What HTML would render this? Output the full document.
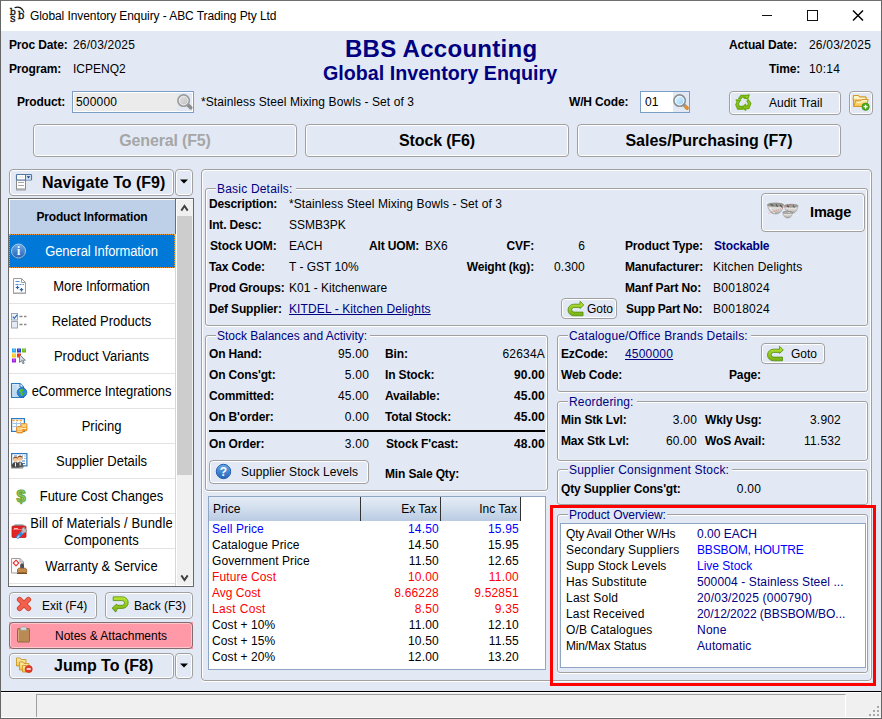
<!DOCTYPE html>
<html lang="en">
<head>
<meta charset="utf-8">
<title>Global Inventory Enquiry - ABC Trading Pty Ltd</title>
<style>
*{box-sizing:border-box;margin:0;padding:0}
html,body{width:882px;height:719px;overflow:hidden;background:#e2e9f4}
body{position:relative;font-family:"Liberation Sans",sans-serif;font-size:12px;line-height:14px;color:#000}
.a{position:absolute;white-space:nowrap}
.b{font-weight:bold;letter-spacing:-.15px}
.r{text-align:right}
.n{letter-spacing:.2px}
.c{text-align:center}
.nv{color:#000080}
.bl{color:#0000ff}
.rd{color:#ff0000}
.lk{color:#000080;text-decoration:underline}
.btn{position:absolute;border:1px solid #a0a0a0;border-radius:4px;background:#e2e9f4;box-shadow:inset 0 0 0 1px #fff}
.grp{position:absolute;border:1px solid #a0a0a0;border-radius:3px;box-shadow:inset 1px 1px 0 #fff,inset -1px 0 0 #fff,0 1px 0 #fff}
.lg{position:absolute;top:-7px;left:10px;padding:0 3px 0 1px;background:#e2e9f4;color:#000080;font-size:12px;line-height:14px;white-space:nowrap}
.it{left:28px;width:147px;font-size:13px;line-height:15px;letter-spacing:0;transform:scaleY(1.06)}
.sep{left:9px;width:166px;height:1px;background:#e3e3e3}
.pe{left:361px;width:78px}
.pi{left:441px;width:78px}
</style>
</head>
<body>
<!-- window frame + title bar -->
<div class="a" style="left:0;top:0;width:882px;height:31px;background:#fff"></div>
<div class="a" style="left:0;top:0;width:882px;height:719px;border:1px solid #666;border-top:1px solid #707070;pointer-events:none;z-index:50"></div>
<div class="a" style="left:30px;top:8px;font-size:12px;line-height:16px;letter-spacing:-0.08px">Global Inventory Enquiry - ABC Trading Pty Ltd</div>
<svg class="a" style="left:750px;top:2px" width="130" height="28" viewBox="0 0 130 28" fill="none" stroke="#111" stroke-width="1">
<path d="M12 13.500h10"/>
<rect x="57.500" y="8.500" width="10" height="10"/>
<path d="M103 8.500l10 10M113 8.500l-10 10" stroke-width="1.450" stroke="#000"/>
</svg>

<!-- header -->
<div class="a b" style="left:9px;top:38px">Proc Date:</div>
<div class="a n" style="left:73px;top:38px">26/03/2025</div>
<div class="a b" style="left:9px;top:62px">Program:</div>
<div class="a" style="left:73px;top:62px">ICPENQ2</div>
<div class="a b nv" style="left:345px;top:35px;font-size:24px;line-height:28px;letter-spacing:.28px">BBS Accounting</div>
<div class="a b nv" style="left:323px;top:61px;font-size:19.700px;line-height:24px;letter-spacing:0">Global Inventory Enquiry</div>
<div class="a b" style="left:729px;top:38px">Actual Date:</div>
<div class="a n" style="left:809px;top:38px">26/03/2025</div>
<div class="a b" style="left:769px;top:62px">Time:</div>
<div class="a n" style="left:809px;top:62px">10:14</div>

<!-- product row -->
<div class="a b" style="left:17px;top:95px">Product:</div>
<div class="a" style="left:72px;top:91px;width:122px;height:22px;border:1px solid #7c9ec6;background:#ebebeb;box-shadow:inset 0 0 0 1px #fff"></div>
<div class="a n" style="left:76px;top:95px">500000</div>
<div class="a" style="left:201px;top:95px;letter-spacing:.09px">*Stainless Steel Mixing Bowls - Set of 3</div>
<div class="a b" style="left:569px;top:95px">W/H Code:</div>
<div class="a" style="left:640px;top:91px;width:50px;height:22px;border:1px solid #7c9ec6;background:#fff"></div>
<div class="a n" style="left:645px;top:95px">01</div>
<div class="btn" style="left:729px;top:91px;width:112px;height:24px"></div>
<div class="a" style="left:769px;top:96px">Audit Trail</div>
<div class="btn" style="left:849px;top:91px;width:24px;height:24px"></div>

<!-- tabs -->
<div class="btn" style="left:33px;top:124px;width:264px;height:33px"></div>
<div class="a b c" style="left:33px;top:132px;width:264px;font-size:16px;line-height:18px;color:#a6a6a6">General (F5)</div>
<div class="btn" style="left:305px;top:124px;width:264px;height:33px"></div>
<div class="a b c" style="left:305px;top:132px;width:264px;font-size:16px;line-height:18px">Stock (F6)</div>
<div class="btn" style="left:577px;top:124px;width:264px;height:33px"></div>
<div class="a b c" style="left:577px;top:132px;width:264px;font-size:16px;line-height:18px;letter-spacing:0">Sales/Purchasing (F7)</div>

<!--LEFT-->
<!-- navigate button -->
<div class="btn" style="left:9px;top:169px;width:165px;height:27px"></div>
<div class="a b" style="left:42px;top:174px;font-size:16px;line-height:18px;letter-spacing:0">Navigate To (F9)</div>
<div class="btn" style="left:175px;top:169px;width:18px;height:27px"></div>
<svg class="a" style="left:180px;top:179px" width="8" height="5"><path d="M0 .5h8L4 4.500z" fill="#000"/></svg>

<!-- nav list -->
<div class="a" style="left:8px;top:198px;width:186px;height:389px;border:1px solid #696969;background:#fff"></div>
<div class="a" style="left:10px;top:200px;width:165px;height:34px;background:#bed0e8"></div>
<div class="a b c" style="left:9px;top:210px;width:166px;letter-spacing:-.2px">Product Information</div>
<div class="a" style="left:9px;top:234px;width:166px;height:34px;background:#0078d7;border:1px dotted #f0962e"></div>
<div class="a c" style="left:28px;top:244px;width:147px;font-size:13px;line-height:15px;color:#fff;letter-spacing:-.12px;transform:scaleY(1.06)">General Information</div>
<div class="a c it" style="top:279px;letter-spacing:-.12px">More Information</div>
<div class="a c it" style="top:314px">Related Products</div>
<div class="a c it" style="top:349px">Product Variants</div>
<div class="a c it" style="top:384px;letter-spacing:-.12px">eCommerce Integrations</div>
<div class="a c it" style="top:419px">Pricing</div>
<div class="a c it" style="top:454px">Supplier Details</div>
<div class="a c it" style="top:489px">Future Cost Changes</div>
<div class="a c it" style="top:516px;line-height:16px;white-space:normal;letter-spacing:.12px">Bill of Materials / Bundle Components</div>
<div class="a c it" style="top:559px;letter-spacing:.05px">Warranty &amp; Service</div>
<div class="a sep" style="top:303px"></div><div class="a sep" style="top:338px"></div><div class="a sep" style="top:373px"></div>
<div class="a sep" style="top:408px"></div><div class="a sep" style="top:443px"></div><div class="a sep" style="top:478px"></div>
<div class="a sep" style="top:513px"></div><div class="a sep" style="top:548px"></div><div class="a sep" style="top:583px"></div>
<!-- scrollbar -->
<div class="a" style="left:175px;top:199px;width:1px;height:35px;background:#6e6e6e"></div>
<div class="a" style="left:175px;top:234px;width:1px;height:352px;background:#d6d6d6"></div>
<div class="a" style="left:177px;top:200px;width:16px;height:385px;background:#f0f0f0"></div>
<div class="a" style="left:177px;top:216px;width:15px;height:259px;background:#cdcdcd"></div>
<svg class="a" style="left:180px;top:204px" width="10" height="8" fill="none" stroke="#404040" stroke-width="1.900"><path d="M1.300 6.600l3.200-4.600 3.200 4.600"/></svg>
<svg class="a" style="left:180px;top:574px" width="10" height="8" fill="none" stroke="#404040" stroke-width="1.900"><path d="M1.300 1.400l3.200 4.600 3.200-4.600"/></svg>

<!-- exit/back/notes/jump -->
<div class="btn" style="left:9px;top:592px;width:88px;height:27px"></div>
<div class="a" style="left:42px;top:599px">Exit (F4)</div>
<div class="btn" style="left:105px;top:592px;width:88px;height:27px"></div>
<div class="a" style="left:134px;top:599px">Back (F3)</div>
<div class="a" style="left:9px;top:622px;width:184px;height:27px;background:#ff99a8"></div>
<div class="btn" style="left:9px;top:622px;width:184px;height:27px;background:#ff99a8;border-color:#806c6c;box-shadow:inset 0 0 0 1px #ffc6ce"></div>
<div class="a" style="left:55px;top:629px">Notes &amp; Attachments</div>
<div class="btn" style="left:9px;top:653px;width:165px;height:26px"></div>
<div class="a b" style="left:54px;top:657px;font-size:16px;line-height:18px;letter-spacing:0">Jump To (F8)</div>
<div class="btn" style="left:175px;top:653px;width:18px;height:26px"></div>
<svg class="a" style="left:180px;top:663px" width="8" height="5"><path d="M0 .5h8L4 4.500z" fill="#000"/></svg>
<!--/LEFT-->
<!--RIGHT-->
<!-- outer panel -->
<div class="grp" style="left:201px;top:169px;width:671px;height:512px;border-radius:4px"></div>

<!-- Basic Details -->
<div class="grp" style="left:205px;top:188px;width:663px;height:138px"><div class="lg" style="letter-spacing:.2px">Basic Details:</div></div>
<div class="a b" style="left:209px;top:197px">Description:</div>
<div class="a" style="left:289px;top:197px;letter-spacing:.09px">*Stainless Steel Mixing Bowls - Set of 3</div>
<div class="a b" style="left:209px;top:218px">Int. Desc:</div>
<div class="a" style="left:289px;top:218px">SSMB3PK</div>
<div class="a b" style="left:210px;top:239px">Stock UOM:</div>
<div class="a" style="left:289px;top:239px">EACH</div>
<div class="a b" style="left:369px;top:239px">Alt UOM:</div>
<div class="a" style="left:425px;top:239px">BX6</div>
<div class="a b r" style="left:434px;width:100px;top:239px">CVF:</div>
<div class="a r n" style="left:535px;width:50px;top:239px">6</div>
<div class="a b" style="left:625px;top:239px">Product Type:</div>
<div class="a b nv" style="left:714px;top:239px">Stockable</div>
<div class="a b" style="left:209px;top:260px">Tax Code:</div>
<div class="a" style="left:289px;top:260px">T - GST 10%</div>
<div class="a b r" style="left:434px;width:100px;top:260px">Weight (kg):</div>
<div class="a r n" style="left:535px;width:50px;top:260px">0.300</div>
<div class="a b" style="left:625px;top:260px">Manufacturer:</div>
<div class="a" style="left:713px;top:260px;letter-spacing:.17px">Kitchen Delights</div>
<div class="a b" style="left:209px;top:281px">Prod Groups:</div>
<div class="a" style="left:289px;top:281px">K01 - Kitchenware</div>
<div class="a b" style="left:625px;top:281px">Manf Part No:</div>
<div class="a" style="left:713px;top:281px;letter-spacing:.28px">B0018024</div>
<div class="a b" style="left:209px;top:302px">Def Supplier:</div>
<div class="a lk" style="left:289px;top:302px;letter-spacing:.11px">KITDEL - Kitchen Delights</div>
<div class="btn" style="left:561px;top:298px;width:56px;height:21px"></div>
<div class="a" style="left:587px;top:302px">Goto</div>
<div class="a b" style="left:626px;top:302px;letter-spacing:-.3px">Supp Part No:</div>
<div class="a" style="left:713px;top:302px;letter-spacing:.28px">B0018024</div>
<div class="btn" style="left:761px;top:193px;width:104px;height:39px"></div>
<div class="a b" style="left:810px;top:204px;font-size:14.500px;line-height:17px">Image</div>

<!-- Stock Balances -->
<div class="grp" style="left:205px;top:335px;width:343px;height:156px"><div class="lg">Stock Balances and Activity:</div></div>
<div class="a b" style="left:209px;top:347px">On Hand:</div><div class="a r n" style="left:301px;width:68px;top:347px">95.00</div>
<div class="a b" style="left:385px;top:347px">Bin:</div><div class="a r" style="left:460px;width:85px;top:347px;letter-spacing:.2px">62634A</div>
<div class="a b" style="left:209px;top:368px">On Cons'gt:</div><div class="a r n" style="left:301px;width:68px;top:368px">5.00</div>
<div class="a b" style="left:385px;top:368px">In Stock:</div><div class="a b r n" style="left:460px;width:85px;top:368px">90.00</div>
<div class="a b" style="left:209px;top:389px">Committed:</div><div class="a r n" style="left:301px;width:68px;top:389px">45.00</div>
<div class="a b" style="left:385px;top:389px">Available:</div><div class="a b r n" style="left:460px;width:85px;top:389px">45.00</div>
<div class="a b" style="left:209px;top:410px">On B'order:</div><div class="a r n" style="left:301px;width:68px;top:410px">0.00</div>
<div class="a b" style="left:385px;top:410px">Total Stock:</div><div class="a b r n" style="left:460px;width:85px;top:410px">45.00</div>
<div class="a" style="left:209px;top:430px;width:336px;height:2px;background:#000"></div>
<div class="a b" style="left:209px;top:437px">On Order:</div><div class="a r n" style="left:301px;width:68px;top:437px">3.00</div>
<div class="a b" style="left:386px;top:437px">Stock F'cast:</div><div class="a b r n" style="left:460px;width:85px;top:437px">48.00</div>
<div class="btn" style="left:209px;top:460px;width:160px;height:24px"></div>
<div class="a" style="left:241px;top:465px;letter-spacing:.08px">Supplier Stock Levels</div>
<div class="a b" style="left:385px;top:467px">Min Sale Qty:</div>

<!-- Catalogue -->
<div class="grp" style="left:557px;top:335px;width:311px;height:57px"><div class="lg" style="letter-spacing:.155px">Catalogue/Office Brands Details:</div></div>
<div class="a b" style="left:561px;top:347px">EzCode:</div>
<div class="a lk n" style="left:625px;top:347px">4500000</div>
<div class="btn" style="left:761px;top:343px;width:64px;height:21px"></div>
<div class="a" style="left:791px;top:347px">Goto</div>
<div class="a b" style="left:561px;top:368px">Web Code:</div>
<div class="a b" style="left:729px;top:368px">Page:</div>

<!-- Reordering -->
<div class="grp" style="left:557px;top:401px;width:311px;height:60px"><div class="lg" style="letter-spacing:.17px">Reordering:</div></div>
<div class="a b" style="left:561px;top:413px">Min Stk Lvl:</div><div class="a r n" style="left:640px;width:57px;top:413px">3.00</div>
<div class="a b" style="left:705px;top:413px">Wkly Usg:</div><div class="a r n" style="left:780px;width:61px;top:413px">3.902</div>
<div class="a b" style="left:561px;top:434px">Max Stk Lvl:</div><div class="a r n" style="left:640px;width:57px;top:434px">60.00</div>
<div class="a b" style="left:705px;top:434px">WoS Avail:</div><div class="a r n" style="left:780px;width:61px;top:434px">11.532</div>

<!-- Supplier Consignment -->
<div class="grp" style="left:557px;top:469px;width:311px;height:36px"><div class="lg" style="letter-spacing:.2px">Supplier Consignment Stock:</div></div>
<div class="a b" style="left:561px;top:482px">Qty Supplier Cons'gt:</div><div class="a r n" style="left:700px;width:61px;top:482px">0.00</div>

<!-- Price table -->
<div class="a" style="left:208px;top:496px;width:338px;height:174px;border:1px solid #8ea6c4;background:#fff"></div>
<div class="a" style="left:209px;top:497px;width:312px;height:24px;background:linear-gradient(#e4ecf6,#d3dfee 45%,#b9cbe2)"></div>
<div class="a" style="left:360px;top:497px;width:1px;height:24px;background:#333"></div>
<div class="a" style="left:440px;top:497px;width:1px;height:24px;background:#333"></div>
<div class="a" style="left:520px;top:497px;width:1px;height:24px;background:#333"></div>
<div class="a" style="left:213px;top:502px">Price</div>
<div class="a r" style="left:361px;width:76px;top:502px">Ex Tax</div>
<div class="a r" style="left:441px;width:76px;top:502px">Inc Tax</div>
<div class="a bl" style="left:212px;top:522px;letter-spacing:.12px">Sell Price</div><div class="a r bl pe n" style="top:522px">14.50</div><div class="a r bl pi n" style="top:522px">15.95</div>
<div class="a" style="left:212px;top:538px;letter-spacing:.15px">Catalogue Price</div><div class="a r pe n" style="top:538px">14.50</div><div class="a r pi n" style="top:538px">15.95</div>
<div class="a" style="left:212px;top:554px;letter-spacing:.06px">Government Price</div><div class="a r pe n" style="top:554px">11.50</div><div class="a r pi n" style="top:554px">12.65</div>
<div class="a rd" style="left:212px;top:570px;letter-spacing:.14px">Future Cost</div><div class="a r rd pe n" style="top:570px">10.00</div><div class="a r rd pi n" style="top:570px">11.00</div>
<div class="a rd" style="left:212px;top:586px">Avg Cost</div><div class="a r rd pe n" style="top:586px">8.66228</div><div class="a r rd pi n" style="top:586px">9.52851</div>
<div class="a rd" style="left:212px;top:602px;letter-spacing:.33px">Last Cost</div><div class="a r rd pe n" style="top:602px">8.50</div><div class="a r rd pi n" style="top:602px">9.35</div>
<div class="a" style="left:212px;top:618px;letter-spacing:.1px">Cost + 10%</div><div class="a r pe n" style="top:618px">11.00</div><div class="a r pi n" style="top:618px">12.10</div>
<div class="a" style="left:212px;top:634px;letter-spacing:.1px">Cost + 15%</div><div class="a r pe n" style="top:634px">10.50</div><div class="a r pi n" style="top:634px">11.55</div>
<div class="a" style="left:212px;top:650px;letter-spacing:.1px">Cost + 20%</div><div class="a r pe n" style="top:650px">12.00</div><div class="a r pi n" style="top:650px">13.20</div>

<!-- Product Overview -->
<div class="grp" style="left:557px;top:514px;width:311px;height:159px"><div class="lg" style="padding-right:1px;letter-spacing:-.07px">Product Overview:</div></div>
<div class="a" style="left:560px;top:523px;width:306px;height:145px;border:1px solid #8ea6c4;background:#fff"></div>
<div class="a" style="left:566px;top:527px;letter-spacing:-.19px">Qty Avail Other W/Hs</div><div class="a nv" style="left:697px;top:527px">0.00 EACH</div>
<div class="a" style="left:566px;top:543px;letter-spacing:.14px">Secondary Suppliers</div><div class="a bl" style="left:697px;top:543px;letter-spacing:-.14px">BBSBOM, HOUTRE</div>
<div class="a" style="left:566px;top:559px;letter-spacing:.06px">Supp Stock Levels</div><div class="a bl" style="left:697px;top:559px">Live Stock</div>
<div class="a" style="left:566px;top:575px;letter-spacing:.2px">Has Substitute</div><div class="a nv" style="left:697px;top:575px;letter-spacing:.12px">500004 - Stainless Steel ...</div>
<div class="a" style="left:566px;top:591px;letter-spacing:.25px">Last Sold</div><div class="a nv" style="left:697px;top:591px;letter-spacing:.2px">20/03/2025 (000790)</div>
<div class="a" style="left:566px;top:607px;letter-spacing:.19px">Last Received</div><div class="a nv" style="left:697px;top:607px;letter-spacing:-.05px">20/12/2022 (BBSBOM/BO...</div>
<div class="a" style="left:566px;top:623px;letter-spacing:.12px">O/B Catalogues</div><div class="a nv" style="left:697px;top:623px;letter-spacing:.25px">None</div>
<div class="a" style="left:566px;top:639px;letter-spacing:-.16px">Min/Max Status</div><div class="a nv" style="left:697px;top:639px;letter-spacing:.1px">Automatic</div>

<!-- red highlight -->
<div class="a" style="left:550px;top:505px;width:326px;height:181px;border:3px solid #f00"></div>
<!--/RIGHT-->
<!--ICONS-->
<svg class="a" style="left:0;top:0;pointer-events:none" width="882" height="719" viewBox="0 0 882 719">
<defs>
<linearGradient id="gBlue" x1="0" y1="0" x2="0" y2="1"><stop offset="0" stop-color="#6aaae8"/><stop offset="1" stop-color="#2564b8"/></linearGradient>
<linearGradient id="gGreen" x1="0" y1="0" x2="0" y2="1"><stop offset="0" stop-color="#bce634"/><stop offset="1" stop-color="#76b012"/></linearGradient>
<linearGradient id="gFold" x1="0" y1="0" x2="0" y2="1"><stop offset="0" stop-color="#fff0b0"/><stop offset="1" stop-color="#f4c040"/></linearGradient>
<linearGradient id="gLens" x1="0" y1="0" x2="1" y2="1"><stop offset="0" stop-color="#eaf8ff"/><stop offset="1" stop-color="#8ccdf4"/></linearGradient>
<linearGradient id="gLensG" x1="0" y1="0" x2="1" y2="1"><stop offset="0" stop-color="#e4e4e4"/><stop offset="1" stop-color="#bebebe"/></linearGradient>
<linearGradient id="gSteel" x1="0" y1="0" x2="0" y2="1"><stop offset="0" stop-color="#8a8a88"/><stop offset=".45" stop-color="#e4e2de"/><stop offset="1" stop-color="#a8a6a2"/></linearGradient>
<linearGradient id="gCoin" x1="0" y1="0" x2="0" y2="1"><stop offset="0" stop-color="#ffd070"/><stop offset="1" stop-color="#f09020"/></linearGradient>
<linearGradient id="gPage" x1="0" y1="0" x2="1" y2="1"><stop offset="0" stop-color="#e8f2fc"/><stop offset="1" stop-color="#a8cdee"/></linearGradient>
</defs>

<!-- bbs logo -->
<g font-family="'DejaVu Serif','Liberation Serif',serif" fill="#111" stroke="#111" stroke-width=".35">
<text x="9.800" y="14.600" font-size="9.600">b</text>
<text x="10" y="21.800" font-size="11">s</text>
<text x="17.800" y="19" font-size="10.400">b</text>
</g>
<path d="M14.600 7.700c4.300-1.800 8.400.6 9.400 5" fill="none" stroke="#111" stroke-width="1.200"/>

<!-- magnifier grey (product) -->
<rect x="177" y="93" width="15" height="18" fill="#e2e9f4"/>
<path d="M188 105l2.800 2.800" stroke="#8e8e8e" stroke-width="3.600" stroke-linecap="round"/>
<circle cx="183.600" cy="100.600" r="5.700" fill="url(#gLensG)" stroke="#9a9a9a" stroke-width="1.600"/>
<circle cx="183.600" cy="100.600" r="4.300" fill="none" stroke="#ececec" stroke-width=".9"/>
<!-- magnifier blue (W/H) -->
<rect x="673" y="92" width="16" height="20" fill="#e2e9f4"/>
<path d="M684 105l2.800 2.800" stroke="#9a9a9a" stroke-width="3.600" stroke-linecap="round"/>
<path d="M686 107l1.200 1.200" stroke="#e0902c" stroke-width="3.400" stroke-linecap="round"/>
<circle cx="679.600" cy="100.600" r="5.700" fill="url(#gLens)" stroke="#8e8e8e" stroke-width="1.600"/>
<circle cx="679.600" cy="100.600" r="4.300" fill="none" stroke="#f2faff" stroke-width=".9"/>

<!-- recycle (audit trail) -->
<g fill="url(#gGreen)" stroke="#6eac12" stroke-width="1.300" stroke-linejoin="round">
<path d="M738.600 98.600l2.400-3.200h6l2.200-.6-1.400 4-3.800-.8 1.200-1h-3.200l-1.400 2.200z"/>
<path d="M736.200 100l4.200.4-1 1.200-1.200 2.400 1.200 2.400h3.600v2.800h-5.200l-2-4.400 1.400-2.800z"/>
<path d="M748.400 99.800l2.400 3.600-2 5.200h-3.200v1.800l-3.200-3.200 3.200-3v1.600h2l1-2.200-1.600-2.400z"/>
</g>

<!-- folder add -->
<path d="M853.500 106.500V95.500h5l1 1.500h6.500v2.500" fill="url(#gFold)" stroke="#d8962c" stroke-width="1" stroke-linejoin="round"/>
<path d="M853.500 95.500h5l1 1.500h6.500v3h-13z" fill="#fff4c4" stroke="#d8962c" stroke-width="1" stroke-linejoin="round"/>
<path d="M853.500 106.500l2.300-5.500h4.700l1.500-1.500h6.200l-2 7z" fill="url(#gFold)" stroke="#d8962c" stroke-width="1" stroke-linejoin="round"/>
<path d="M856.500 102.200h4.300l1.500-1.500h4.500" fill="none" stroke="#fffbe0" stroke-width="1"/>
<circle cx="865.600" cy="106.700" r="3.700" fill="#4aa818" stroke="#3a8a10" stroke-width=".6"/>
<path d="M863.600 106.700h4M865.600 104.700v4" stroke="#fff" stroke-width="1.300"/>

<!-- navigate icon -->
<rect x="16.500" y="180" width="9" height="9" fill="#fff" stroke="#8a8a8a"/>
<path d="M16 190h10" stroke="#9a9a9a" stroke-width="1"/>
<path d="M18 182.500h6M18 185.500h6" stroke="#a8a8a8" stroke-width="1"/>
<rect x="16.500" y="174.500" width="15" height="5.500" fill="#fff" stroke="#52759f" stroke-width="1.200" rx=".8"/>
<rect x="25.500" y="175" width="5.500" height="4.500" fill="#cfe2f6"/>
<path d="M25.500 174.500v5.500" stroke="#52759f" stroke-width="1"/>
<path d="M26.700 176.300h3.600l-1.800 2.200z" fill="#1d3f6e"/>
<path d="M18.500 177h5" stroke="#dcdcdc" stroke-width="1"/>
<!-- info icon -->
<circle cx="18.500" cy="251" r="7" fill="url(#gBlue)" stroke="#a9c8ea" stroke-width="1"/>
<path d="M12.300 254.500a7 7 0 0 0 12.400 0" fill="none" stroke="#6a7a90" stroke-width=".7" opacity=".7"/>
<text x="18.500" y="255.200" font-family="'Liberation Serif',serif" font-weight="bold" font-size="11.500" fill="#fff" text-anchor="middle">i</text>

<!-- more information -->
<path d="M13.500 278.500h8l4 4v10.500h-12z" fill="#fff" stroke="#9c9c9c" stroke-width="1"/>
<path d="M13 293.500h13" stroke="#a8a8a8" stroke-width="1"/>
<path d="M21.500 278.500v4h4" fill="none" stroke="#9c9c9c" stroke-width="1"/>
<path d="M15.500 281.500h4M15.500 284.500h3M19.500 284.500h2M22.500 284.500h1.500" stroke="#5a8fd0" stroke-width="1.100"/>
<path d="M17.500 285.800v3.400M15.800 287.500h3.400M21.500 288v3.400M19.800 289.700h3.400" stroke="#2a66b0" stroke-width="1.200"/>

<!-- related products -->
<rect x="11.500" y="313.500" width="6" height="6.500" fill="#eef2f8" stroke="#9aa6b8"/>
<rect x="11.500" y="321.500" width="6" height="6.500" fill="#e6ebf3" stroke="#9aa6b8"/>
<path d="M12.800 316.600l1.500 1.700 2.900-3.400" fill="none" stroke="#2a6ac0" stroke-width="1.200"/>
<path d="M19.500 316.500h3M24 316.500h2.500M19.500 324.500h3M24 324.500h2.500" stroke="#8a8a8a" stroke-width="1.400"/>

<!-- product variants -->
<rect x="12" y="348.500" width="4" height="4" fill="#2aa6f2"/><rect x="17" y="348.500" width="4" height="4" fill="#2a3acc"/><rect x="22" y="348.500" width="4" height="4" fill="#6aba1a"/>
<rect x="12" y="353.500" width="4" height="4" fill="#f8c81c"/><rect x="17" y="353.500" width="4" height="4" fill="#e63a1a"/>
<rect x="12" y="358.500" width="4" height="4" fill="#a61ee8"/>
<path d="M13 350h2M18 350h2M23 350h2M13 355h2M13 360h2" stroke="#fff" stroke-width=".8" opacity=".55"/>
<path d="M19.500 354.500v8l2-1.800 1.400 3 1.300-.6-1.400-2.900h2.600z" fill="#d4d8dc" stroke="#6e7780" stroke-width=".9" stroke-linejoin="round"/>

<!-- ecommerce -->
<path d="M11.500 383.500h8.500l3.500 3.500v10.500h-12z" fill="url(#gPage)" stroke="#2a7ac4" stroke-width="1.200" stroke-linejoin="round"/>
<path d="M13 385h3.500v11H13z" fill="#bcd8f0" opacity=".8"/>
<path d="M20 383.500v3.500h3.500" fill="#fff" stroke="#2a7ac4" stroke-width="1"/>
<circle cx="22" cy="392.500" r="4.800" fill="#2a86e0" stroke="#1a60b0" stroke-width=".8"/>
<path d="M20 389.500c1.500-.8 3.400-.4 3.600.8-.2 1-1.600.8-1.800 1.800.2 1 1.800 1 1.600 2.400-.4 1.200-1.800 1.800-2.600 1.200-.6-1 .4-1.800-.2-2.800-.8-.8-1.800-.6-1.800-1.800 0-.8.600-1.200 1.200-1.600z" fill="#58c020"/>
<path d="M24.600 392c.8.200 1.400.800 1.400 1.600-.4.800-1 .6-1.400 0z" fill="#58c020"/>

<!-- pricing -->
<rect x="11.600" y="418.600" width="12.800" height="12.800" fill="#fff" stroke="#2a7ac4" stroke-width="1.200"/>
<path d="M12.500 420.500h11" stroke="#f6a030" stroke-width="1.600" stroke-dasharray="2.200 1.400"/>
<path d="M12.500 423.500h11M12.500 426.500h11M16.500 422v9M20.500 422v9" stroke="#a8c4e4" stroke-width="1"/>
<g fill="url(#gCoin)" stroke="#e08a20" stroke-width=".8">
<rect x="21" y="423.500" width="6" height="7.500" rx="1.200"/>
<rect x="16.500" y="426.500" width="6.500" height="6.500" rx="1.200"/>
</g>
<path d="M21.800 426h4.400M21.800 428.500h4.400M17.300 429h4.900M17.300 431.200h4.900" stroke="#fff2c8" stroke-width=".9"/>

<!-- supplier details -->
<rect x="11.600" y="453.600" width="15.300" height="12.300" fill="#fff" stroke="#2a7ac4" stroke-width="1.200"/>
<path d="M14 456h3M19.500 456h1M22 456h1M24.500 456h1M22 458.500h1M24.500 458.500h1M22 461h3M22 463.500h3" stroke="#4a7ab8" stroke-width="1"/>
<circle cx="20" cy="458.300" r="2.500" fill="#f0c090"/><path d="M17.400 457.800c.2-2.600 5-2.600 5.200 0-1.400-1-3.800-1-5.200 0z" fill="#8a4a10"/>
<path d="M16.500 467.500c0-4 1.600-6 3.500-6s3.500 2 3.500 6z" fill="#5a5a5a"/>
<circle cx="15.500" cy="459.300" r="2.600" fill="#f4c898"/><path d="M12.800 458.800c.2-2.800 5.200-2.800 5.400 0-1.400-1-4-1-5.400 0z" fill="#9a5414"/>
<path d="M11.500 468c0-4 1.800-6 4-6s4 2 4 6z" fill="#484848"/>
<path d="M15.500 462.500v4M20.200 462.500v3" stroke="#f4f4f4" stroke-width="1"/>
<path d="M11 468h12" stroke="#8a8a8a" stroke-width="1"/>

<!-- future cost: dollar -->
<text x="21" y="501.500" font-family="'Liberation Sans',sans-serif" font-weight="bold" font-size="16.500" fill="#9ad070" stroke="#6aa840" stroke-width="1.100" text-anchor="middle">$</text>

<!-- bill of materials -->
<rect x="14.500" y="524.300" width="9" height="2" fill="#8aa8a8"/>
<rect x="12" y="526" width="14" height="11.500" rx="1" fill="#e22424" stroke="#c01818" stroke-width=".8"/>
<path d="M13 529.500h12" stroke="#f87070" stroke-width="1"/>
<path d="M14 528.500h4" stroke="#fff" stroke-width="1" opacity=".7"/>
<path d="M17.800 537l6-6" stroke="#2a8ee0" stroke-width="3.200" stroke-linecap="round"/>
<path d="M17.500 537.500l1.500-1.500" stroke="#bfe2fa" stroke-width="1.200" stroke-linecap="round"/>
<path d="M22.800 531.800l2-2" stroke="#b8bcc0" stroke-width="3" stroke-linecap="round"/>
<path d="M24.600 527.200a2.600 2.600 0 1 0 2.400 3.400l-1.800-.4-.8-1.400z" fill="#c4c8cc" stroke="#888c90" stroke-width=".7"/>

<!-- warranty -->
<path d="M11.500 558.500h8.500l3.500 3.500v11h-12z" fill="#fafafa" stroke="#a0a0a0" stroke-width="1"/>
<path d="M20 558.500v3.500h3.500" fill="none" stroke="#a0a0a0" stroke-width="1"/>
<path d="M16 560.200l2.800 2.800-2.800 2.800-2.800-2.800z" fill="#fff" stroke="#e82a2a" stroke-width="1.100"/>
<path d="M20.200 565.200a1.900 1.900 0 0 1 3.800 0v3.300h-3.800z" fill="#4a4e58"/>
<path d="M17.500 572.500v-2.500c0-1 .8-1.800 1.800-1.800h5.600c1 0 1.800.8 1.800 1.800v2.500z" fill="#c88a48" stroke="#8a5a24" stroke-width=".8"/>
<path d="M17 573.500h10" stroke="#7a4a1c" stroke-width="1"/>

<!-- exit X -->
<path d="M19.600 599.600l8.800 8.800M28.400 599.600l-8.800 8.800" stroke="#d04030" stroke-width="5.400" stroke-linecap="round"/>
<path d="M19.600 599.600l8.800 8.800M28.400 599.600l-8.800 8.800" stroke="#f0604c" stroke-width="4" stroke-linecap="round"/>

<!-- back arrow -->
<path d="M113.200 596.800H122.400A5.800 5.800 0 0 1 122.400 608.400H117.600L115.600 612.100L112.100 608.100L116.600 604L117.400 605.300H122.200A2.350 2.350 0 0 0 122.200 600.600H113.200Z" fill="url(#gGreen)" stroke="#4e8a0c" stroke-width=".8" stroke-linejoin="round"/>

<!-- clipboard -->
<rect x="17.500" y="628.500" width="12" height="13.500" rx="1" fill="#b98a54" stroke="#94683a" stroke-width="1"/>
<path d="M18.500 630v11" stroke="#d4aa78" stroke-width="1"/>
<path d="M20.500 630.200h6v-1.600c0-1-.8-1.600-1.600-1.600h-2.800c-.8 0-1.600.6-1.600 1.600z" fill="#dcdcdc" stroke="#9a9a9a" stroke-width=".7"/>

<!-- jump folders -->
<g fill="url(#gFold)" stroke="#c8982c" stroke-width=".9" stroke-linejoin="round">
<path d="M16.500 658h3.500l1 1.500h5v6.500h-9.500z"/>
<path d="M19.500 662h3.500l1 1.500h5v6.500h-9.500z"/>
<path d="M22.500 665.500h3.500l1 1.500h4v5h-8.500z"/>
</g>
<circle cx="28.700" cy="669" r="3.600" fill="#e63a2a" stroke="#c02a1c" stroke-width=".6"/>
<path d="M26.700 669h4" stroke="#fff" stroke-width="1.500"/>

<!-- goto arrows -->
<path d="M580 301.300L583.800 304.900L580 308.500V307.400H574A2.350 2.350 0 0 0 574 312.100H583V315.800H573.800A5.800 5.800 0 0 1 573.800 304.200H580Z" fill="url(#gGreen)" stroke="#4e8a0c" stroke-width=".8" stroke-linejoin="round"/>
<path transform="translate(199.500 45)" d="M580 301.300L583.800 304.900L580 308.500V307.400H574A2.350 2.350 0 0 0 574 312.100H583V315.800H573.800A5.800 5.800 0 0 1 573.800 304.200H580Z" fill="url(#gGreen)" stroke="#4e8a0c" stroke-width=".8" stroke-linejoin="round"/>

<!-- bowls -->
<g fill="#f4f6fa"><rect x="766.500" y="202" width="1" height="1"/><rect x="779" y="201" width="2" height="1"/><rect x="787" y="201.500" width="1" height="1"/><rect x="796" y="201.500" width="1" height="1"/><rect x="766" y="213.500" width="1.500" height="1"/><rect x="771" y="215.500" width="1" height="1"/><rect x="780.500" y="216" width="1" height="1"/><rect x="796.500" y="215" width="1.500" height="1"/><rect x="793" y="214" width="1" height="1"/></g>
<g stroke="#8a8882" stroke-width=".5">
<path d="M767.500 204.500c3-1.800 13-1.800 16 0-.5 5-3 9.500-8 9.500s-7.500-4.500-8-9.500z" fill="url(#gSteel)"/>
<ellipse cx="775.500" cy="204.800" rx="7.800" ry="1.700" fill="#9a9892"/>
<path d="M784.500 205.500c2.500-1.500 11-1.500 13.500 0-.4 4.500-2.600 8-6.800 8s-6.300-3.500-6.700-8z" fill="url(#gSteel)"/>
<ellipse cx="791.200" cy="205.700" rx="6.500" ry="1.400" fill="#a4a29c"/>
<path d="M782.800 212.200c1.800-1 8-1 9.800 0-.3 3.400-2 5.800-4.900 5.800s-4.600-2.400-4.900-5.800z" fill="url(#gSteel)"/>
<ellipse cx="787.700" cy="212.400" rx="4.700" ry="1" fill="#b4b2ac"/>
</g>
<path d="M770.500 204.500l3 1M776 204.200l1.500 2.500M780 205l2.500 2.500M787 205.500l2 1.500M793 205.500l1.500 2M786 209l2.500 3" stroke="#3c3a38" stroke-width="1.100" opacity=".75"/>
<path d="M770 207.500c1 3 3 5 5 5.500M786 208.500c.8 2.500 2 3.500 3.500 4" fill="none" stroke="#fff" stroke-width=".9" opacity=".8"/>
<path d="M768.500 213.500L791 204.500" stroke="#e23c3c" stroke-width=".7" stroke-dasharray=".8 1.300" opacity=".6"/>

<!-- help icon -->
<circle cx="223.500" cy="471.500" r="7.200" fill="url(#gBlue)" stroke="#1f5fb4" stroke-width="1"/>
<text x="223.500" y="476" font-family="'Liberation Sans',sans-serif" font-weight="bold" font-size="12" fill="#fff" text-anchor="middle">?</text>

</svg>
<!--/ICONS-->
<!--STATUS-->
<div class="a" style="left:1px;top:691px;width:880px;height:27px;background:#f0f0f0;border-top:1px solid #000;box-shadow:inset 0 1px 0 #fff,inset 0 -1px 0 #fff"></div>
<div class="a" style="left:36px;top:694px;width:810px;height:23px;border-left:1px solid #a0a0a0;border-top:1px solid #a0a0a0;border-right:1px solid #fff"></div>
<svg class="a" style="left:869px;top:706px" width="12" height="12" fill="#a8a8a8"><rect x="8" y="0" width="2" height="2"/><rect x="4" y="4" width="2" height="2"/><rect x="8" y="4" width="2" height="2"/><rect x="0" y="8" width="2" height="2"/><rect x="4" y="8" width="2" height="2"/><rect x="8" y="8" width="2" height="2"/></svg>
<!--/STATUS-->
</body>
</html>
